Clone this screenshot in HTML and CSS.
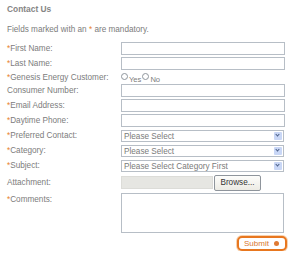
FILE: index.html
```html
<!DOCTYPE html>
<html lang="en">
<head>
  <meta charset="UTF-8" />
  <title>Contact Us</title>
  <link rel="stylesheet" href="styles.css">
</head>
<body>
  <div class="contact-wrapper">
    <h1>Contact Us</h1>
    <p class="intro">Fields marked with an <span class="req">*</span> are mandatory.</p>

    <form class="contact-form">
      <div class="row">
        <label for="first"><span class="req">*</span>First Name:</label>
        <input type="text" id="first" class="field">
      </div>
      <div class="row">
        <label for="last"><span class="req">*</span>Last Name:</label>
        <input type="text" id="last" class="field">
      </div>
      <div class="row row-radio">
        <label><span class="req">*</span>Genesis Energy Customer:</label>
        <div class="radios">
          <span class="radio"></span><span class="radio-text">Yes</span>
          <span class="radio"></span><span class="radio-text">No</span>
        </div>
      </div>
      <div class="row">
        <label for="consumer">Consumer Number:</label>
        <input type="text" id="consumer" class="field">
      </div>
      <div class="row">
        <label for="email"><span class="req">*</span>Email Address:</label>
        <input type="text" id="email" class="field">
      </div>
      <div class="row">
        <label for="phone"><span class="req">*</span>Daytime Phone:</label>
        <input type="text" id="phone" class="field">
      </div>
      <div class="row">
        <label><span class="req">*</span>Preferred Contact:</label>
        <div class="select"><span>Please Select</span><span class="arrow"></span></div>
      </div>
      <div class="row">
        <label><span class="req">*</span>Category:</label>
        <div class="select"><span>Please Select</span><span class="arrow"></span></div>
      </div>
      <div class="row">
        <label><span class="req">*</span>Subject:</label>
        <div class="select"><span>Please Select Category First</span><span class="arrow"></span></div>
      </div>
      <div class="row row-file">
        <label>Attachment:</label>
        <div class="file">
          <span class="file-box"></span>
          <span class="browse">Browse...</span>
        </div>
      </div>
      <div class="row row-comments">
        <label for="comments"><span class="req">*</span>Comments:</label>
        <textarea id="comments" class="comments"></textarea>
      </div>
      <div class="submit-row">
        <button type="button" class="submit">Submit <span class="dot"></span></button>
      </div>
    </form>
  </div>
</body>
</html>
```

FILE: styles.css
```css
body {
  margin: 0;
  background: #fff;
  font-family: "Liberation Sans", Arial, sans-serif;
  font-size: 8.2px;
  color: #7c7c7c;
}

.contact-wrapper {
  padding: 4px 0 0 7px;
  width: 278px;
}

h1 {
  margin: 0;
  font-size: 8.4px;
  font-weight: bold;
  color: #858585;
  line-height: 10px;
}

.intro {
  margin: 11px 0 0;
  line-height: 10px;
}

.req {
  color: #e8822c;
}

.contact-form {
  margin-top: 6px;
  display: flex;
  flex-direction: column;
}

.row {
  display: flex;
  align-items: center;
  height: 15px;
}

.row label {
  width: 114px;
  flex: none;
}

.field {
  box-sizing: border-box;
  width: 164px;
  height: 13px;
  margin: 0;
  padding: 0;
  border: 1px solid #b7bec6;
  background: #fff;
}

.row-radio {
  height: 12px;
}

.radios {
  display: flex;
  align-items: center;
  padding-top: 1px;
}

.radio {
  box-sizing: border-box;
  width: 7px;
  height: 7px;
  border: 1px solid #8e959c;
  border-radius: 50%;
  background: #fff;
  margin-top: -2px;
}

.radio-text {
  font-size: 7.6px;
  padding: 3px 1px 0 1px;
}

.select {
  box-sizing: border-box;
  width: 163px;
  height: 12px;
  border: 1px solid #b7bec6;
  display: flex;
  align-items: center;
  justify-content: space-between;
  padding-left: 2px;
  color: #7a7a7a;
  margin-top: 1px;
}

.arrow {
  width: 8px;
  height: 8px;
  margin-right: 1px;
  background: #c9d7f6;
  border-radius: 1px;
  position: relative;
}

.arrow::after {
  content: "";
  position: absolute;
  left: 2px;
  top: 1px;
  width: 2px;
  height: 2px;
  border-right: 1.3px solid #4b5f86;
  border-bottom: 1.3px solid #4b5f86;
  transform: rotate(45deg);
}

.row-file {
  height: 19px;
}

.file {
  display: flex;
  align-items: center;
}

.file-box {
  width: 92px;
  height: 13px;
  background: #e6e6e2;
  border: 1px solid #dcdcd8;
  box-sizing: border-box;
}

.browse {
  box-sizing: border-box;
  width: 47px;
  height: 16px;
  margin-left: 1px;
  border: 1px solid #8f959c;
  border-radius: 2px;
  background: linear-gradient(#fdfdfb, #ecebe4);
  color: #333;
  display: flex;
  align-items: center;
  justify-content: center;
}

.row-comments {
  height: 42px;
  align-items: flex-start;
  padding-top: 1px;
}

.row-comments label {
  padding-top: 2px;
}

.comments {
  box-sizing: border-box;
  width: 163px;
  height: 40px;
  margin: 0;
  border: 1px solid #b7bec6;
  resize: none;
}

.submit-row {
  display: flex;
  justify-content: flex-end;
  margin-right: -2px;
  margin-top: 1px;
}

.submit {
  box-sizing: border-box;
  width: 50px;
  height: 15px;
  padding: 0 0 0 5px;
  border: 2px solid #e8771f;
  border-radius: 5px;
  box-shadow: 0 0 0 1px #f7d2b0;
  background: #fff;
  color: #d9772f;
  font-family: "Liberation Sans", Arial, sans-serif;
  font-size: 8px;
  display: flex;
  align-items: center;
  gap: 5px;
}

.dot {
  width: 5px;
  height: 5px;
  border-radius: 50%;
  background: #e07a33;
}
```
